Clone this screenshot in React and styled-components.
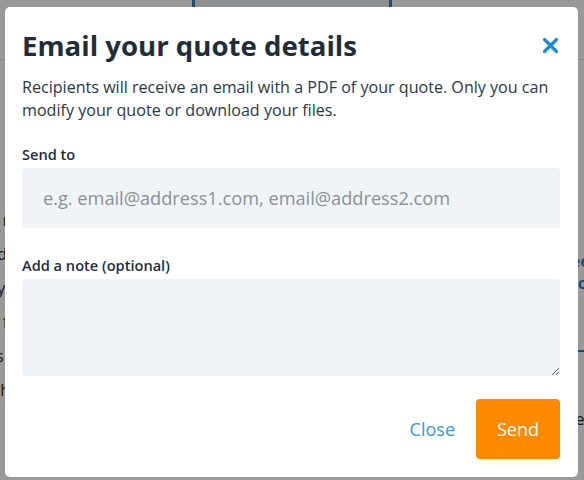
import React from 'react';
import styled, { createGlobalStyle } from 'styled-components';

const GlobalStyle = createGlobalStyle`
  html, body {
    margin: 0;
    padding: 0;
    width: 100%;
    height: 100%;
    overflow: hidden;
    font-family: 'Open Sans', 'Noto Sans', Arial, sans-serif;
  }
  #root { height: 100%; }
  * { box-sizing: border-box; }
`;

const App = () => {
  return (
    <>
      <GlobalStyle />
      <Page>
        {/* page behind the dialog */}
        <PageTabs>
          <PageTab />
          <PageTab active />
          <PageTab />
        </PageTabs>
        <PageBody>
          <PageText>
            <p>Our plan gives you the coverage you need and the option to add more.</p>
            <p>Details about this plan are shown below, including premiums and benefits.</p>
            <p>Compare each option so you can choose what matters most for your business.</p>
            <p>Our team is here to help you every step of the way, from start to finish.</p>
            <p>Review the documents you receive and tell us about any changes we need to make.</p>
            <p>Your registration. Formal inspection with</p>
          </PageText>
          <PageSide>
            <SideLink>See more</SideLink>
            <SideRule />
            <SideText>View</SideText>
            <SideRule />
          </PageSide>
        </PageBody>
      </Page>

      <Overlay>
        <Dialog>
          <DialogHeader>
            <Title>Email your quote details</Title>
            <CloseIcon aria-label="Close">
              <svg width="17" height="17" viewBox="0 0 17 17">
                <path d="M2.5 2.5 L14.5 14.5 M14.5 2.5 L2.5 14.5" stroke="#1c8ad4" strokeWidth="3.2" strokeLinecap="round" />
              </svg>
            </CloseIcon>
          </DialogHeader>

          <Description>
            Recipients will receive an email with a PDF of your quote. Only you can
            modify your quote or download your files.
          </Description>

          <Field>
            <Label>Send to</Label>
            <Input placeholder="e.g. email@address1.com, email@address2.com" />
          </Field>

          <Field>
            <Label>Add a note (optional)</Label>
            <TextArea />
          </Field>

          <Footer>
            <LinkButton>Close</LinkButton>
            <SendButton>Send</SendButton>
          </Footer>
        </Dialog>
      </Overlay>
    </>
  );
};

// Styled Components
const Page = styled.div`
  height: 100%;
  background: #ffffff;
  color: #1f2d3a;
`;

const PageTabs = styled.div`
  display: grid;
  grid-template-columns: 192px 200px 1fr;
  height: 60px;
  border-bottom: 1px solid #dde3e8;
`;

const PageTab = styled.div`
  background: ${props => (props.active ? '#e8f0f6' : '#ffffff')};
  border-left: ${props => (props.active ? '3px solid #2f7ec2' : 'none')};
  border-right: ${props => (props.active ? '3px solid #2f7ec2' : 'none')};
`;

const PageBody = styled.div`
  display: flex;
  justify-content: space-between;
  padding-top: 150px;
`;

const PageText = styled.div`
  margin-left: -480px;
  width: 490px;
  font-size: 16px;
  line-height: 20px;

  p {
    margin: 0 0 14px;
    white-space: nowrap;
    text-align: right;
  }
`;

const PageSide = styled.div`
  width: 20px;
  display: flex;
  flex-direction: column;
  gap: 56px;
  padding-top: 40px;
`;

const SideLink = styled.div`
  color: #2f7ec2;
  font-weight: 700;
  font-size: 16px;
  margin-left: -2px;
`;

const SideRule = styled.div`
  height: 2px;
  background: #2f7ec2;
`;

const SideText = styled.div`
  font-size: 16px;
  margin-left: -2px;
`;

const Overlay = styled.div`
  position: fixed;
  inset: 0;
  background: rgba(0, 0, 0, 0.4);
  padding: 7px 6px 3px 5px;
  display: flex;
`;

const Dialog = styled.div`
  flex: 1;
  background: #ffffff;
  border-radius: 5px;
  padding: 21px 18px 18px 17px;
  display: flex;
  flex-direction: column;
`;

const DialogHeader = styled.div`
  display: flex;
  justify-content: space-between;
  align-items: center;
`;

const Title = styled.h2`
  margin: 0;
  font-size: 27.6px;
  line-height: 34px;
  font-weight: 700;
  color: #1f2d3a;
`;

const CloseIcon = styled.button`
  border: none;
  background: none;
  padding: 0;
  margin-right: 1px;
  display: flex;
  cursor: pointer;
`;

const Description = styled.p`
  margin: 14px 0 0;
  font-size: 16.1px;
  line-height: 23px;
  color: #2b3844;
`;

const Field = styled.div`
  display: flex;
  flex-direction: column;
  margin-top: 23px;

  & + & {
    margin-top: 28px;
  }
`;

const Label = styled.label`
  font-size: 14.6px;
  font-weight: 600;
  line-height: 19px;
  color: #1f2d3a;
  margin-bottom: 4px;
`;

const Input = styled.input`
  height: 60px;
  border: none;
  border-radius: 4px;
  background: #f1f4f7;
  padding: 0 21px;
  font-family: inherit;
  font-size: 18.2px;
  outline: none;

  &::placeholder {
    color: #8a9096;
  }
`;

const TextArea = styled.textarea`
  height: 97px;
  border: none;
  border-radius: 4px;
  background: #f1f4f7;
  padding: 12px 21px;
  font-family: inherit;
  font-size: 18px;
  outline: none;
  resize: vertical;
`;

const Footer = styled.div`
  margin-top: auto;
  display: flex;
  justify-content: flex-end;
  align-items: center;
  gap: 21px;
`;

const LinkButton = styled.button`
  border: none;
  background: none;
  padding: 0;
  font-family: inherit;
  font-size: 18px;
  color: #3a97dc;
  cursor: pointer;
`;

const SendButton = styled.button`
  width: 84px;
  height: 60px;
  border: none;
  border-radius: 4px;
  background: #ff8a00;
  color: #ffffff;
  font-family: inherit;
  font-size: 18px;
  cursor: pointer;
`;

export default App;
